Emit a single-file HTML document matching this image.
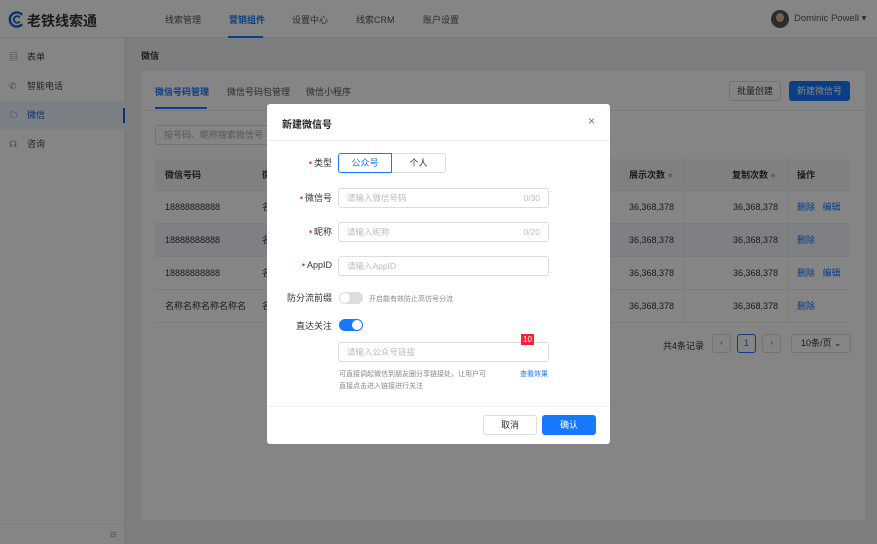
<!DOCTYPE html>
<html><head><meta charset="utf-8"><style>
*{box-sizing:border-box;margin:0;padding:0}
body{width:877px;height:544px;overflow:hidden;font-family:"Liberation Sans","Noto Sans CJK SC",sans-serif;font-size:9px;color:#333;background:#f0f2f5;position:relative}
.abs{position:absolute}
.hdr{left:0;top:0;width:877px;height:38px;background:#fff;border-bottom:1px solid #e8e8e8}
.nav{top:13px;font-size:9px;color:#555}
.side{left:0;top:38px;width:125px;height:506px;background:#fff;border-right:1px solid #e8e8e8}
.si{left:0;width:125px;height:29px;line-height:29px;padding-left:27px;font-size:9px;color:#444}
.card{left:141px;top:71px;width:724px;height:449px;background:#fff}
.th{background:#f5f6f7;font-weight:bold;color:#333}
.row{left:155px;width:695px;height:33px;border-bottom:1px solid #eee;line-height:33px}
.ov{left:0;top:0;width:877px;height:544px;background:rgba(0,0,0,.48)}
.modal{left:267px;top:104px;width:343px;height:340px;background:#fff;border-radius:3px}
.lbl{width:65px;text-align:right;font-size:9px;color:#333}
.lbl b{color:#f5222d;font-weight:normal;margin-right:2px}
.inp{left:71px;width:211px;height:20px;border:1px solid #ddd;border-radius:3px;color:#bbb;font-size:8.5px;line-height:18px;padding-left:8px}
.inp span{position:absolute;right:8px;top:0}
.blue{color:#1677ff}
</style></head><body>
<div class="abs hdr">
 <svg class="abs" style="left:8px;top:11px" width="17" height="17" viewBox="0 0 18 18"><path d="M15 4A7.5 7.5 0 1 0 15 14" fill="none" stroke="#1a5fd0" stroke-width="2.6"/><path d="M12.5 7A3.5 3.5 0 1 0 12.5 11" fill="none" stroke="#1a5fd0" stroke-width="2"/></svg>
 <div class="abs" style="left:27px;top:11px;font-size:14px;font-weight:bold;color:#333">老铁线索通</div>
 <div class="abs nav" style="left:165px">线索管理</div>
 <div class="abs nav" style="left:229px;color:#1677ff;font-weight:bold">营销组件</div>
 <div class="abs" style="left:228px;top:36px;width:35px;height:2px;background:#1677ff"></div>
 <div class="abs nav" style="left:292px">设置中心</div>
 <div class="abs nav" style="left:356px">线索CRM</div>
 <div class="abs nav" style="left:423px">账户设置</div>
 <div class="abs" style="left:771px;top:10px;width:18px;height:18px;border-radius:50%;background:#555;overflow:hidden"><div class="abs" style="left:5px;top:3px;width:8px;height:9px;border-radius:50%;background:#d9b8a0"></div></div>
 <div class="abs" style="left:794px;top:13px;font-size:9.5px;color:#555">Dominic Powell ▾</div>
</div>
<div class="abs side">
 <div class="abs si" style="top:5px"><span class="abs" style="left:9px;color:#888">▤</span>表单</div>
 <div class="abs si" style="top:34px"><span class="abs" style="left:9px;color:#888">✆</span>智能电话</div>
 <div class="abs si" style="top:63px;background:#eef3fb;color:#1a5fd0"><span class="abs" style="left:9px">☁</span>微信<div class="abs" style="right:0;top:7px;width:2px;height:15px;background:#1a5fd0"></div></div>
 <div class="abs si" style="top:92px"><span class="abs" style="left:9px;color:#888">☊</span>咨询</div>
 <div class="abs" style="left:0;top:486px;width:124px;border-top:1px solid #eee"></div>
 <div class="abs" style="left:110px;top:492px;color:#999;font-size:8px">⊟</div>
</div>
<div class="abs" style="left:141px;top:49px;font-weight:bold;font-size:9px">微信</div>
<div class="abs card"></div>
<div class="abs" style="left:155px;top:85px;color:#1677ff;font-weight:bold">微信号码管理</div>
<div class="abs" style="left:155px;top:107px;width:52px;height:2px;background:#1677ff"></div>
<div class="abs" style="left:227px;top:85px;color:#555">微信号码包管理</div>
<div class="abs" style="left:306px;top:85px;color:#555">微信小程序</div>
<div class="abs" style="left:141px;top:110px;width:724px;border-top:1px solid #eee"></div>
<div class="abs" style="left:729px;top:81px;width:52px;height:20px;border:1px solid #ddd;border-radius:3px;text-align:center;line-height:18px">批量创建</div>
<div class="abs" style="left:789px;top:81px;width:61px;height:20px;background:#1677ff;color:#fff;border-radius:3px;text-align:center;line-height:20px">新建微信号</div>
<div class="abs" style="left:155px;top:125px;width:150px;height:20px;border:1px solid #ddd;border-radius:3px;color:#aaa;padding-left:8px;line-height:18px">按号码、昵称搜索微信号</div>
<div class="abs row th" style="top:159px;height:32px;line-height:32px"><span class="abs" style="left:10px">微信号码</span><span class="abs" style="left:107px">微</span><span class="abs" style="left:474px">展示次数 <span style="color:#bbb">●</span></span><span class="abs" style="left:577px">复制次数 <span style="color:#bbb">●</span></span><span class="abs" style="left:642px">操作</span></div>
<div class="abs row" style="top:191px"><span class="abs" style="left:10px">18888888888</span><span class="abs" style="left:107px">名</span><span class="abs" style="left:474px">36,368,378</span><span class="abs" style="left:578px">36,368,378</span><span class="abs blue" style="left:642px">删除 &nbsp;&nbsp;编辑</span></div>
<div class="abs row" style="top:224px;background:#f3f6fb"><span class="abs" style="left:10px">18888888888</span><span class="abs" style="left:107px">名</span><span class="abs" style="left:474px">36,368,378</span><span class="abs" style="left:578px">36,368,378</span><span class="abs blue" style="left:642px">删除</span></div>
<div class="abs row" style="top:257px"><span class="abs" style="left:10px">18888888888</span><span class="abs" style="left:107px">名</span><span class="abs" style="left:474px">36,368,378</span><span class="abs" style="left:578px">36,368,378</span><span class="abs blue" style="left:642px">删除 &nbsp;&nbsp;编辑</span></div>
<div class="abs row" style="top:290px"><span class="abs" style="left:10px">名称名称名称名称名</span><span class="abs" style="left:107px">名</span><span class="abs" style="left:474px">36,368,378</span><span class="abs" style="left:578px">36,368,378</span><span class="abs blue" style="left:642px">删除</span></div>
<div class="abs" style="left:683px;top:159px;height:164px;border-left:1px solid #eee"></div>
<div class="abs" style="left:788px;top:159px;height:164px;border-left:1px solid #eee"></div>
<div class="abs" style="left:663px;top:339px">共4条记录</div>
<div class="abs" style="left:712px;top:334px;width:19px;height:19px;border:1px solid #ddd;border-radius:3px;text-align:center;line-height:17px;font-size:7px">‹</div>
<div class="abs" style="left:737px;top:334px;width:19px;height:19px;border:1px solid #1677ff;border-radius:3px;text-align:center;line-height:17px;color:#1677ff">1</div>
<div class="abs" style="left:762px;top:334px;width:19px;height:19px;border:1px solid #ddd;border-radius:3px;text-align:center;line-height:17px;font-size:7px">›</div>
<div class="abs" style="left:791px;top:334px;width:60px;height:19px;border:1px solid #ddd;border-radius:3px;line-height:17px;padding-left:9px">10条/页 ⌄</div>
<div class="abs ov"></div>
<div class="abs modal">
 <div class="abs" style="left:15px;top:12px;font-size:10px;font-weight:bold;color:#222">新建微信号</div>
 <div class="abs" style="left:321px;top:10px;font-size:12px;color:#777">×</div>
 <div class="abs" style="left:0;top:36px;width:343px;border-top:1px solid #eee"></div>
 <div class="abs lbl" style="top:52px"><b>•</b>类型</div>
 <div class="abs" style="left:71px;top:49px;width:54px;height:20px;border:1px solid #1677ff;border-radius:3px 0 0 3px;color:#1677ff;text-align:center;line-height:18px">公众号</div>
 <div class="abs" style="left:125px;top:49px;width:54px;height:20px;border:1px solid #ddd;border-left:none;border-radius:0 3px 3px 0;text-align:center;line-height:18px">个人</div>
 <div class="abs lbl" style="top:87px"><b>•</b>微信号</div>
 <div class="abs inp" style="top:84px">请输入微信号码<span>0/30</span></div>
 <div class="abs lbl" style="top:121px"><b>•</b>昵称</div>
 <div class="abs inp" style="top:118px">请输入昵称<span>0/20</span></div>
 <div class="abs lbl" style="top:156px"><b>•</b>AppID</div>
 <div class="abs inp" style="top:152px">请输入AppID</div>
 <div class="abs lbl" style="top:187px">防分流前缀</div>
 <div class="abs" style="left:72px;top:188px;width:24px;height:12px;border-radius:6px;background:#ddd"><div class="abs" style="left:1px;top:1px;width:10px;height:10px;border-radius:50%;background:#fff"></div></div>
 <div class="abs" style="left:102px;top:190px;font-size:7px;color:#888">开启能有效防止高仿号分流</div>
 <div class="abs lbl" style="top:215px">直达关注</div>
 <div class="abs" style="left:72px;top:215px;width:24px;height:12px;border-radius:6px;background:#1677ff"><div class="abs" style="left:13px;top:1px;width:10px;height:10px;border-radius:50%;background:#fff"></div></div>
 <div class="abs inp" style="top:238px">请输入公众号链接</div>
 <div class="abs" style="left:254px;top:230px;width:13px;height:11px;background:#f5222d;color:#fff;font-size:8px;text-align:center;line-height:11px">10</div>
 <div class="abs" style="left:72px;top:265px;font-size:7px;color:#888;line-height:12px">可直接调起微信到朋友圈分享链接处，让用户可<br>直接点击进入链接进行关注</div>
 <div class="abs blue" style="left:253px;top:265px;font-size:7px;line-height:12px">查看效果</div>
 <div class="abs" style="left:0;top:302px;width:343px;border-top:1px solid #eee"></div>
 <div class="abs" style="left:216px;top:311px;width:54px;height:20px;border:1px solid #ddd;border-radius:3px;text-align:center;line-height:18px">取消</div>
 <div class="abs" style="left:275px;top:311px;width:54px;height:20px;background:#1677ff;color:#fff;border-radius:3px;text-align:center;line-height:20px">确认</div>
</div>
</body></html>
